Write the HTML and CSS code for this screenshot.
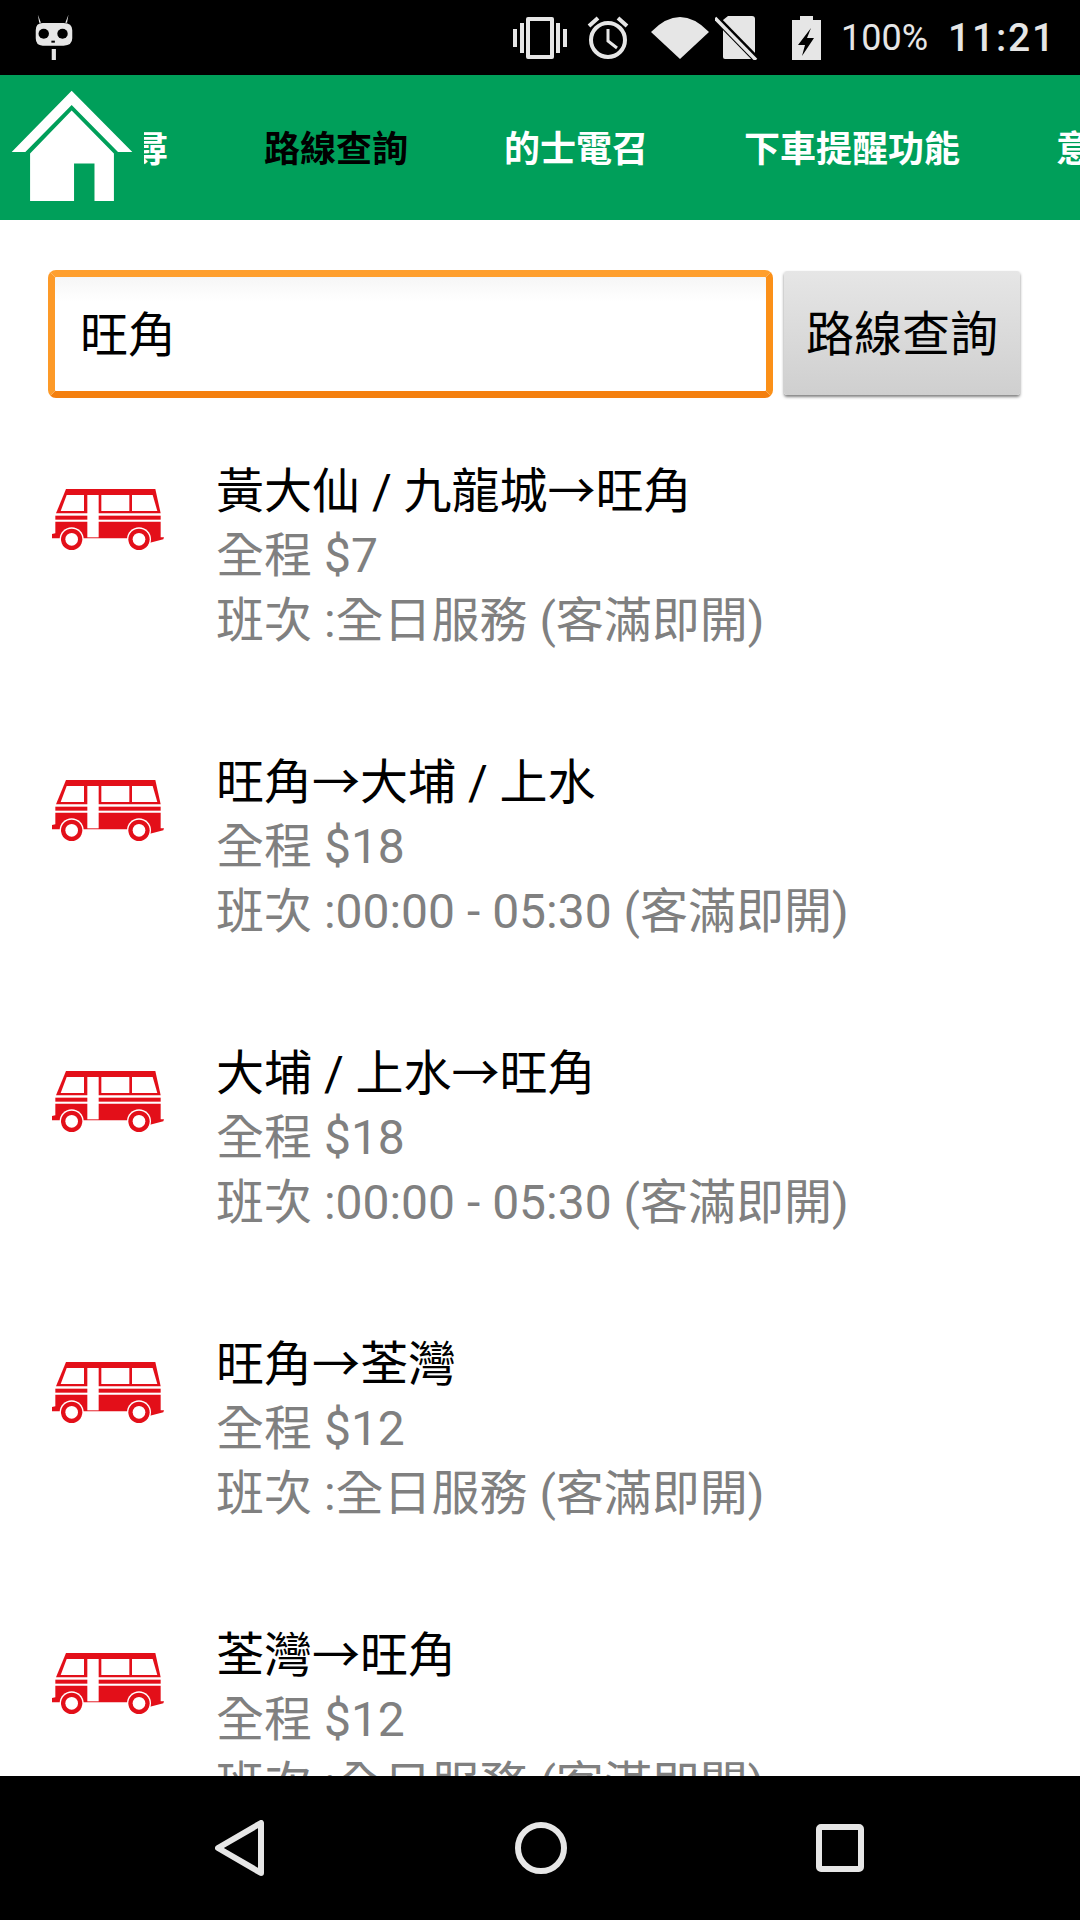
FILE: index.html
```html
<!DOCTYPE html>
<html lang="zh-Hant">
<head>
  <meta charset="UTF-8">
  <meta name="viewport" content="width=device-width, initial-scale=1.0">
  <title>路線查詢</title>
  <link rel="stylesheet" href="styles.css">
</head>
<body>
  <svg width="0" height="0" class="defs">
    <symbol id="bus" viewBox="66 117 336 183">
      <polygon fill="#e30f19" points="108,117 376,117 392,190 78,190"/>
      <polygon fill="#fff" points="110,135 162,135 162,183 92,183"/>
      <rect fill="#fff" x="214" y="135" width="84" height="48"/>
      <polygon fill="#fff" points="306,135 368,135 382,183 306,183"/>
      <rect fill="#e30f19" x="76" y="197" width="316" height="12"/>
      <polygon fill="#e30f19" points="76,215 392,215 392,262 402,262 400,268 360,278 290,265 160,265 92,265 66,265 66,252 76,250"/>
      <rect fill="#fff" x="172" y="135" width="34" height="127"/>
      <circle fill="#fff" cx="125" cy="268" r="36"/>
      <circle fill="#e30f19" cx="125" cy="268" r="32"/>
      <circle fill="#fff" cx="125" cy="268" r="19"/>
      <circle fill="#fff" cx="327" cy="268" r="36"/>
      <circle fill="#e30f19" cx="327" cy="268" r="32"/>
      <circle fill="#fff" cx="327" cy="268" r="19"/>
    </symbol>
  </svg>

  <div class="status-bar">
    <svg class="mascot" width="40" height="47" viewBox="100 45 115 141" preserveAspectRatio="none">
      <path fill="#e6e6e6" d="M111 47l9 24h-5zM199 47l-9 24h5zM125 72h60q25 0 25 22v24q0 22-25 22h-60q-20 0-20-22v-24q0-22 20-22z"/>
      <circle cx="128" cy="104" r="15"/>
      <circle cx="182" cy="104" r="15"/>
      <rect x="150" y="125" width="10" height="6"/>
      <rect fill="#e6e6e6" x="151" y="150" width="12" height="33"/>
    </svg>
    <div class="status-right">
      <svg width="54" height="42" viewBox="0 0 54 42" class="vibrate">
        <path fill="none" stroke="#e6e6e6" stroke-width="4" d="M15 2h24v38h-24z" stroke-linejoin="round"/>
        <path fill="#e6e6e6" d="M0 12h4v18h-4zM7 6h4v30h-4zM43 6h4v30h-4zM50 12h4v18h-4z"/>
      </svg>
      <svg width="42" height="43" viewBox="0 0 42 43" class="alarm">
        <circle cx="21" cy="24" r="17" fill="none" stroke="#e6e6e6" stroke-width="4"/>
        <path fill="none" stroke="#e6e6e6" stroke-width="3" d="M21 13v12l9 7"/>
        <path fill="none" stroke="#e6e6e6" stroke-width="4" d="M2 10l9-8M40 10l-9-8"/>
      </svg>
      <svg width="58" height="42" viewBox="0 0 58 42" class="wifi">
        <path fill="#e6e6e6" d="M0 15q29-30 58 0l-29 27z"/>
      </svg>
      <svg width="44" height="45" viewBox="0 0 44 45" class="sim">
        <path fill="#e6e6e6" d="M8 5v37q0 2 2 2h30v-40q0-3-3-3h-24z"/>
        <path stroke="#000" stroke-width="7" d="M-2 0l44 45"/>
        <path stroke="#e6e6e6" stroke-width="3.5" d="M0 3l41 42"/>
      </svg>
      <svg width="29" height="44" viewBox="0 0 29 44" class="battery">
        <path fill="#e6e6e6" d="M8 0h13v4h8v40h-29v-40h8z"/>
        <path d="M19 12l-13 17h7l-3 11 12-18h-7z"/>
      </svg>
      <span class="battery-pct">100%</span>
      <span class="clock">11:21</span>
    </div>
  </div>

  <nav class="tabs">
    <div class="home">
      <svg width="122" height="112" viewBox="30 270 358 338" preserveAspectRatio="none">
        <polygon fill="#fff" points="208,272 386,457 344,457 208,315 72,457 32,457"/>
        <path fill="#fff" d="M208 332L86 462V605H215V492H275V605H332V462z"/>
      </svg>
    </div>
    <div class="tab-strip">
      <a class="tab">小巴搜尋</a>
      <a class="tab active">路線查詢</a>
      <a class="tab">的士電召</a>
      <a class="tab">下車提醒功能</a>
      <a class="tab">意見反映</a>
    </div>
  </nav>

  <main class="content">
    <form class="search">
      <div class="search-input">旺角</div>
      <button type="button" class="search-btn">路線查詢</button>
    </form>

    <ul class="routes">
      <li class="route">
        <svg class="bus" width="112" height="61"><use href="#bus"/></svg>
        <div class="route-text">
          <p class="route-name">黃大仙 / 九龍城→旺角</p>
          <p>全程 $7</p>
          <p>班次 :全日服務 (客滿即開)</p>
        </div>
      </li>
      <li class="route">
        <svg class="bus" width="112" height="61"><use href="#bus"/></svg>
        <div class="route-text">
          <p class="route-name">旺角→大埔 / 上水</p>
          <p>全程 $18</p>
          <p>班次 :00:00 - 05:30 (客滿即開)</p>
        </div>
      </li>
      <li class="route">
        <svg class="bus" width="112" height="61"><use href="#bus"/></svg>
        <div class="route-text">
          <p class="route-name">大埔 / 上水→旺角</p>
          <p>全程 $18</p>
          <p>班次 :00:00 - 05:30 (客滿即開)</p>
        </div>
      </li>
      <li class="route">
        <svg class="bus" width="112" height="61"><use href="#bus"/></svg>
        <div class="route-text">
          <p class="route-name">旺角→荃灣</p>
          <p>全程 $12</p>
          <p>班次 :全日服務 (客滿即開)</p>
        </div>
      </li>
      <li class="route">
        <svg class="bus" width="112" height="61"><use href="#bus"/></svg>
        <div class="route-text">
          <p class="route-name">荃灣→旺角</p>
          <p>全程 $12</p>
          <p>班次 :全日服務 (客滿即開)</p>
        </div>
      </li>
    </ul>
  </main>

  <div class="nav-bar">
    <svg width="50" height="56" viewBox="0 0 50 56">
      <path fill="none" stroke="#e6e6e6" stroke-width="6" stroke-linejoin="round" d="M46 3v50L3 28z"/>
    </svg>
    <svg width="52" height="52" viewBox="0 0 52 52">
      <circle cx="26" cy="26" r="23" fill="none" stroke="#e6e6e6" stroke-width="6"/>
    </svg>
    <svg width="48" height="48" viewBox="0 0 48 48">
      <rect x="3" y="3" width="42" height="42" rx="2" fill="none" stroke="#e6e6e6" stroke-width="6"/>
    </svg>
  </div>
</body>
</html>
```

FILE: styles.css
```css
* {
  box-sizing: border-box;
}

body {
  display: flex;
  flex-direction: column;
  width: 1080px;
  height: 1920px;
  margin: 0;
  overflow: hidden;
  background-color: #fff;
  font-family: Roboto, "Noto Sans CJK TC", sans-serif;
}

.defs {
  display: none;
}

.status-bar {
  display: flex;
  justify-content: space-between;
  align-items: center;
  flex: none;
  height: 75px;
  padding: 0 24px 0 34px;
  background-color: #000;
  color: #e6e6e6;
}

.status-right {
  display: flex;
  align-items: center;
}

.vibrate {
  margin-right: 20px;
}

.alarm {
  margin-right: 22px;
}

.wifi {
  margin-right: 6px;
}

.sim {
  margin-right: 33px;
}

.battery {
  margin-right: 20px;
}

.battery-pct {
  margin-right: 20px;
  font-size: 36px;
}

.clock {
  font-size: 39px;
  font-weight: 500;
  letter-spacing: 1.8px;
}

.tabs {
  position: relative;
  flex: none;
  height: 145px;
  overflow: hidden;
  background-color: #009f5a;
}

.home {
  position: absolute;
  top: 0;
  left: 0;
  z-index: 1;
  width: 144px;
  height: 145px;
  padding: 15px 0 0 11px;
  background-color: #009f5a;
}

.tab-strip {
  display: flex;
  align-items: center;
  height: 100%;
  margin-left: -24px;
  padding-bottom: 4px;
  white-space: nowrap;
}

.tab {
  flex: none;
  padding: 0 48px;
  color: #fff;
  font-size: 36px;
  font-weight: 700;
}

.tab.active {
  color: #000;
}

.content {
  flex: 1;
  min-height: 0;
  overflow: hidden;
}

.search {
  display: flex;
  align-items: flex-start;
  gap: 11px;
  margin: 50px 0 0 48px;
}

.search-input {
  display: flex;
  align-items: center;
  width: 725px;
  height: 128px;
  padding: 0 0 7px 25px;
  border: 7px solid;
  border-color: #ff9f2e #fb9018 #f47f0e #fd9a28;
  border-radius: 8px;
  background: linear-gradient(#f6f6f6, #fff 22%);
  color: #000;
  font-size: 48px;
}

.search-btn {
  width: 236px;
  height: 124px;
  margin-top: 1px;
  padding: 0 0 7px;
  border: none;
  border-radius: 3px;
  background: linear-gradient(#e6e6e6, #cfcfcf);
  box-shadow: 0 2px 3px rgba(0, 0, 0, 0.5);
  color: #000;
  font-family: inherit;
  font-size: 48px;
}

.routes {
  margin: 60px 0 0;
  padding: 0;
  list-style: none;
}

.route {
  display: flex;
  align-items: flex-start;
  margin-bottom: 96px;
  padding-left: 52px;
}

.bus {
  flex: none;
  margin: 31px 52px 0 0;
}

.route-text p {
  margin: 0;
  color: #808080;
  font-size: 48px;
  line-height: 65px;
}

.route-text .route-name {
  padding-top: 2px;
  color: #000;
  line-height: 63px;
}

.nav-bar {
  display: flex;
  align-items: center;
  flex: none;
  justify-content: space-between;
  height: 144px;
  padding: 0 216px 0 215px;
  background-color: #000;
}
```
